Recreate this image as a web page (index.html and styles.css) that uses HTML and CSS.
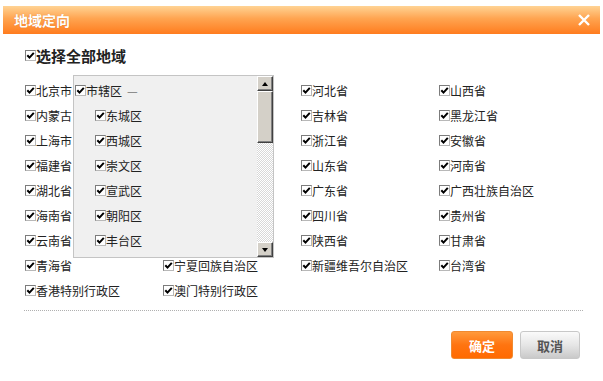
FILE: index.html
```html
<!DOCTYPE html>
<html lang="zh-CN">
<head>
  <meta charset="UTF-8" />
  <title>地域定向</title>
  <link rel="stylesheet" href="styles.css">
</head>
<body>

  <!-- Dialog -->
  <div class="dialog">
    <div class="dialog-title">
      <span>地域定向</span>
      <svg class="close" width="14" height="14" viewBox="0 0 14 14">
        <path d="M2 2 L12 12 M12 2 L2 12" stroke="#fff" stroke-width="2.4" fill="none"/>
      </svg>
    </div>

    <div class="select-all">
      <span class="cb"></span>选择全部地域
    </div>

    <div class="regions">
      <div class="item"><span class="cb"></span>北京市</div>
      <div class="item"><span class="cb"></span>天津市</div>
      <div class="item"><span class="cb"></span>河北省</div>
      <div class="item"><span class="cb"></span>山西省</div>

      <div class="item"><span class="cb"></span>内蒙古自治区</div>
      <div class="item"><span class="cb"></span>辽宁省</div>
      <div class="item"><span class="cb"></span>吉林省</div>
      <div class="item"><span class="cb"></span>黑龙江省</div>

      <div class="item"><span class="cb"></span>上海市</div>
      <div class="item"><span class="cb"></span>江苏省</div>
      <div class="item"><span class="cb"></span>浙江省</div>
      <div class="item"><span class="cb"></span>安徽省</div>

      <div class="item"><span class="cb"></span>福建省</div>
      <div class="item"><span class="cb"></span>江西省</div>
      <div class="item"><span class="cb"></span>山东省</div>
      <div class="item"><span class="cb"></span>河南省</div>

      <div class="item"><span class="cb"></span>湖北省</div>
      <div class="item"><span class="cb"></span>湖南省</div>
      <div class="item"><span class="cb"></span>广东省</div>
      <div class="item"><span class="cb"></span>广西壮族自治区</div>

      <div class="item"><span class="cb"></span>海南省</div>
      <div class="item"><span class="cb"></span>重庆市</div>
      <div class="item"><span class="cb"></span>四川省</div>
      <div class="item"><span class="cb"></span>贵州省</div>

      <div class="item"><span class="cb"></span>云南省</div>
      <div class="item"><span class="cb"></span>西藏自治区</div>
      <div class="item"><span class="cb"></span>陕西省</div>
      <div class="item"><span class="cb"></span>甘肃省</div>

      <div class="item"><span class="cb"></span>青海省</div>
      <div class="item"><span class="cb"></span>宁夏回族自治区</div>
      <div class="item"><span class="cb"></span>新疆维吾尔自治区</div>
      <div class="item"><span class="cb"></span>台湾省</div>

      <div class="item"><span class="cb"></span>香港特别行政区</div>
      <div class="item"><span class="cb"></span>澳门特别行政区</div>

      <!-- Sub-region popup (北京市) -->
      <div class="popup">
        <div class="popup-list">
          <div class="item"><span class="cb"></span>市辖区<span class="dash">—</span></div>
          <div class="item sub"><span class="cb"></span>东城区</div>
          <div class="item sub"><span class="cb"></span>西城区</div>
          <div class="item sub"><span class="cb"></span>崇文区</div>
          <div class="item sub"><span class="cb"></span>宣武区</div>
          <div class="item sub"><span class="cb"></span>朝阳区</div>
          <div class="item sub"><span class="cb"></span>丰台区</div>
          <div class="item sub"><span class="cb"></span>石景山区</div>
          <div class="item sub"><span class="cb"></span>海淀区</div>
        </div>
        <div class="scrollbar">
          <div class="sb-btn"><span class="arrow up"></span></div>
          <div class="sb-thumb"></div>
          <div class="sb-track"></div>
          <div class="sb-btn"><span class="arrow down"></span></div>
        </div>
      </div>
    </div>

    <div class="separator"></div>

    <div class="actions">
      <button class="btn btn-ok">确定</button>
      <button class="btn btn-cancel">取消</button>
    </div>
  </div>

</body>
</html>
```

FILE: styles.css
```css
/* Base */
* {
  margin: 0;
  padding: 0;
  box-sizing: border-box;
}

body {
  background: #fff;
  color: #222;
  font-family: "Noto Sans CJK SC", "Noto Sans", sans-serif;
  font-size: 12px;
}

.dialog {
  width: 603px;
  height: 381px;
  padding-top: 6px;
}

/* Title bar */
.dialog-title {
  margin: 0 3px;
  height: 28px;
  padding: 0 9px 0 11px;
  display: flex;
  align-items: center;
  justify-content: space-between;
  background: linear-gradient(to bottom, #ffd394 0%, #ffa450 45%, #ff7c1e 100%);
  color: #fff;
  font-size: 14px;
  font-weight: bold;
}

.dialog-title span {
  text-shadow: 0 0 1px rgba(160, 70, 0, 0.4);
}

.close {
  display: block;
}

/* Checkbox */
.cb {
  display: inline-block;
  flex: none;
  width: 11px;
  height: 11px;
  border: 1px solid #7c7c7c;
  border-right-color: #b8b8b8;
  border-bottom-color: #b8b8b8;
  background: #fff url("data:image/svg+xml;utf8,<svg xmlns='http://www.w3.org/2000/svg' width='9' height='9' viewBox='0 0 9 9'><path d='M1.3 4.2 L3.5 6.6 L7.8 1.8' stroke='black' stroke-width='2' fill='none'/></svg>") no-repeat center;
}

/* Select all */
.select-all {
  margin: 11px 0 0 25px;
  height: 20px;
  display: flex;
  align-items: center;
  font-size: 15px;
  font-weight: bold;
  color: #222;
}

/* Region grid */
.regions {
  position: relative;
  margin: 13px 0 0 25px;
  display: grid;
  grid-template-columns: repeat(4, 138px);
  grid-auto-rows: 25px;
}

.item {
  display: flex;
  align-items: center;
  white-space: nowrap;
  color: #222;
}

/* Popup for sub regions */
.popup {
  position: absolute;
  left: 48px;
  top: -3px;
  width: 201px;
  height: 183px;
  border: 1px solid #c4c4c4;
  background: #f0f0f0;
  display: flex;
}

.popup-list {
  flex: 1;
  overflow: hidden;
  padding: 2px 0 0 1px;
}

.popup-list .item {
  height: 25px;
}

.popup-list .sub {
  padding-left: 20px;
}

.dash {
  margin-left: 5px;
  color: #777;
}

/* Classic scrollbar */
.scrollbar {
  width: 16px;
  display: flex;
  flex-direction: column;
}

.sb-btn,
.sb-thumb {
  background: #d4d0c8;
  border: 1px solid;
  border-color: #fff #404040 #404040 #fff;
  box-shadow: inset -1px -1px 0 #808080;
}

.sb-btn {
  height: 15px;
  display: flex;
  align-items: center;
  justify-content: center;
}

.sb-thumb {
  height: 52px;
}

.sb-track {
  flex: 1;
  background: repeating-conic-gradient(#d8d8d8 0 25%, #fff 0 50%) 0 0 / 2px 2px;
}

.arrow {
  width: 0;
  height: 0;
  border-left: 3px solid transparent;
  border-right: 3px solid transparent;
}

.arrow.up {
  border-bottom: 4px solid #000;
}

.arrow.down {
  border-top: 4px solid #000;
}

/* Footer */
.separator {
  margin: 7px 20px 0 24px;
  border-top: 1px dotted #b0b0b0;
}

.actions {
  margin-top: 20px;
  padding-right: 23px;
  display: flex;
  justify-content: flex-end;
  gap: 7px;
}

.btn {
  height: 28px;
  border-radius: 3px;
  font-family: "Noto Sans CJK SC", sans-serif;
  font-size: 13px;
  font-weight: bold;
  cursor: pointer;
}

.btn-ok {
  width: 62px;
  color: #fff;
  border: 1px solid #f08a30;
  background: linear-gradient(to bottom, #ff9a3c 0%, #ff7410 50%, #ff6a00 100%);
}

.btn-cancel {
  width: 60px;
  color: #555;
  border: 1px solid #c8c8c8;
  background: linear-gradient(to bottom, #fafafa 0%, #e6e6e6 50%, #c9c9c9 100%);
}
```
